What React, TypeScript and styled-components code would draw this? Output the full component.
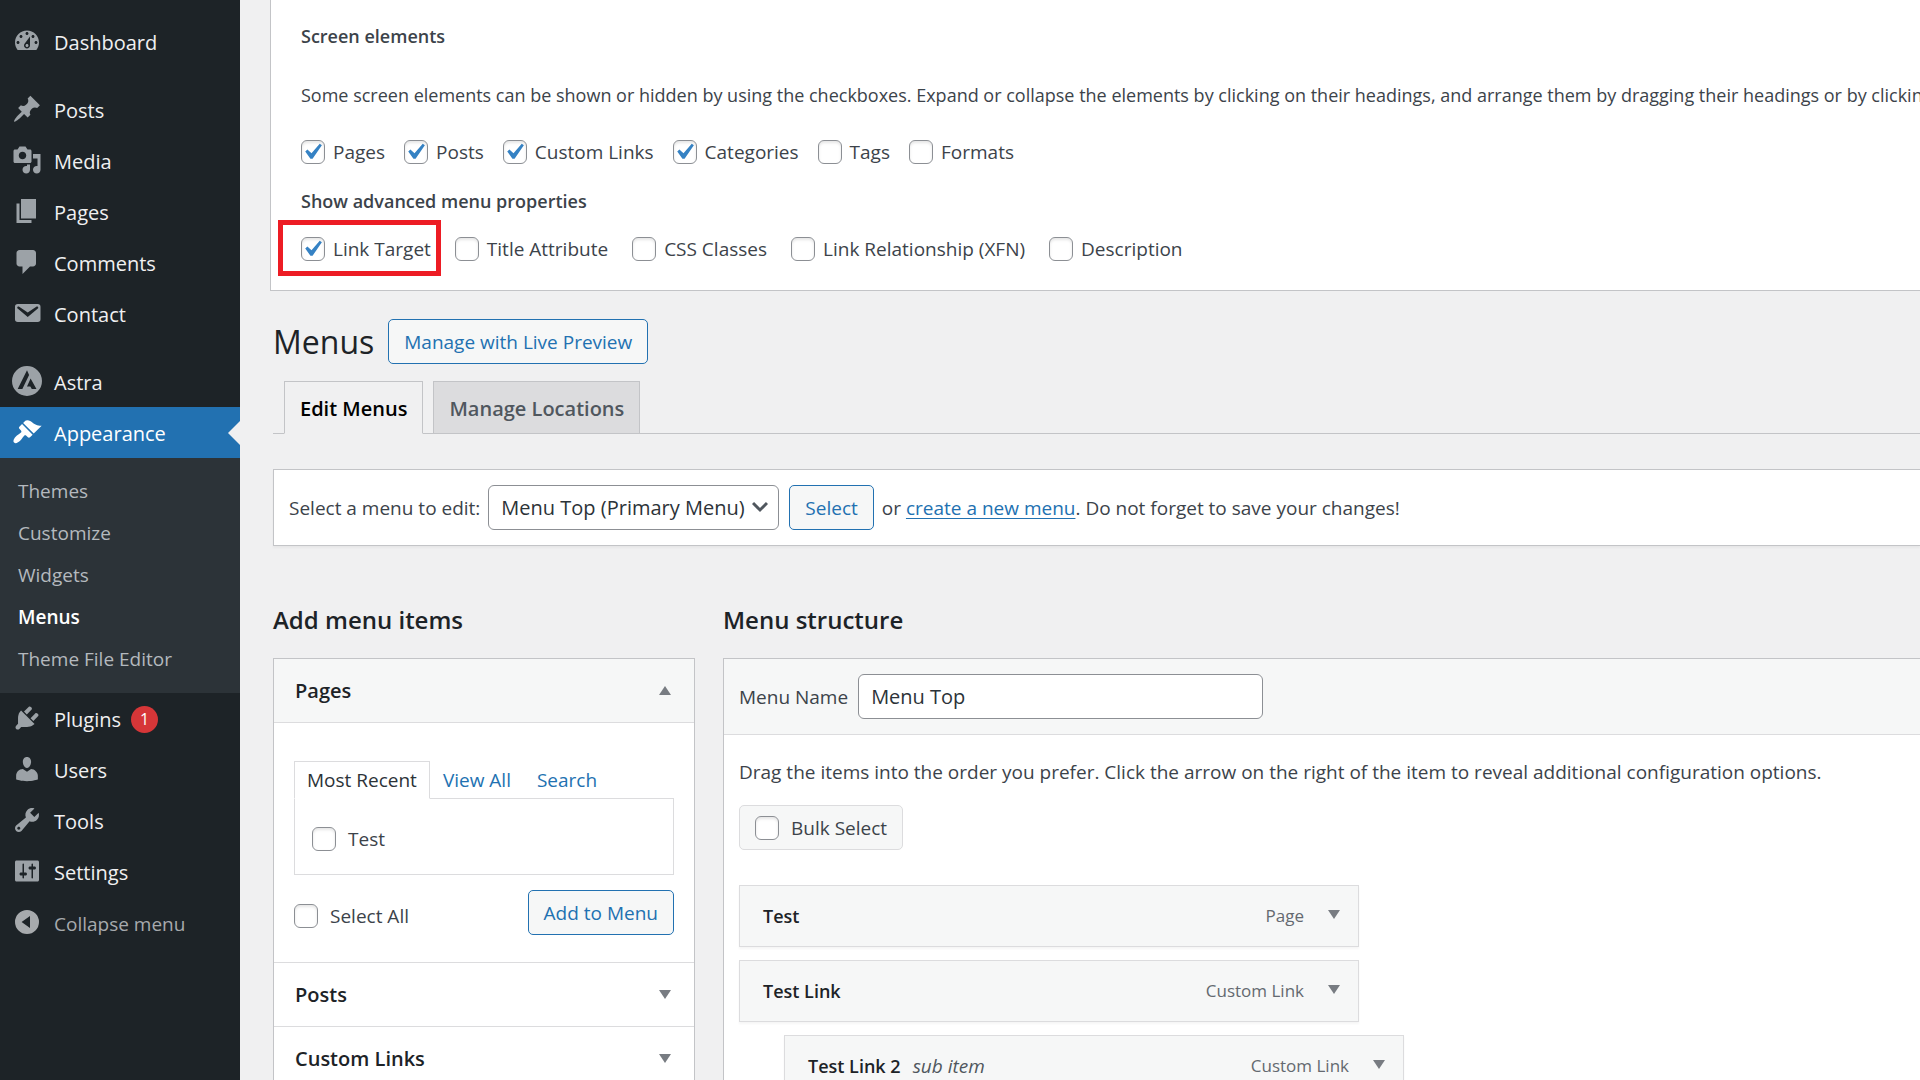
import React, { useState } from "react";
import styled, { createGlobalStyle, css } from "styled-components";

const line = "#c3c4c7";
const softLine = "#dcdcde";
const pageBg = "#f0f0f1";
const blue = "#2271b1";
const subtle = "#f6f7f7";

const GlobalStyle = createGlobalStyle`
  *, *::before, *::after { box-sizing: border-box; }
  body {
    margin: 0;
    background: ${pageBg};
    color: #3c434a;
    font-family: "Open Sans", "Noto Sans", sans-serif;
    font-size: 19px;
    line-height: 28px;
  }
  h1, h2, h3, p, ul { margin: 0; padding: 0; }
  ul { list-style: none; }
  button, input, select { font-family: inherit; }
`;

const Shell = styled.div`
  display: flex;
  height: 100vh;
  overflow: hidden;
`;

/* ---------- Sidebar ---------- */

const Sidebar = styled.nav`
  flex: 0 0 240px;
  padding-top: 16px;
  background: #1d2327;
`;

const NavItem = styled.li<{ $spaced?: boolean }>`
  margin-top: ${(p) => (p.$spaced ? "17px" : "0")};
`;

const navRow = css`
  display: flex;
  align-items: center;
  width: 100%;
  height: 51px;
  padding: 2px 12px 0;
  gap: 12px;
  font-size: 20px;
  text-decoration: none;
`;

const NavLink = styled.a<{ $current?: boolean }>`
  ${navRow}
  position: relative;
  color: ${(p) => (p.$current ? "#fff" : "#f0f0f1")};
  background: ${(p) => (p.$current ? blue : "transparent")};
  svg { fill: ${(p) => (p.$current ? "#fff" : "#9ca2a7")}; }
  ${(p) =>
    p.$current &&
    css`
      &::after {
        content: "";
        position: absolute;
        right: 0;
        top: 14px;
        border: 12px solid transparent;
        border-left-width: 0;
        border-right-color: ${pageBg};
      }
    `}
`;

const CollapseButton = styled.button`
  ${navRow}
  border: 0;
  background: none;
  color: #a7aaad;
  font-size: 19px;
  svg { fill: #a7aaad; }
`;

const NavIcon = styled.svg`
  flex: none;
  width: 30px;
  height: 30px;
  margin-bottom: 3px;
`;

const Badge = styled.span`
  display: grid;
  place-items: center;
  width: 27px;
  height: 27px;
  margin-left: -2px;
  border-radius: 50%;
  background: #d63638;
  color: #fff;
  font-size: 16px;
  line-height: 27px;
`;

const SubMenu = styled.ul`
  padding: 12px 0 13px;
  background: #2c3338;
`;

const SubLink = styled.a<{ $current?: boolean }>`
  display: block;
  padding: 0 18px;
  line-height: 42px;
  text-decoration: none;
  color: ${(p) => (p.$current ? "#fff" : "#b4b9be")};
  font-weight: ${(p) => (p.$current ? 600 : 400)};
`;

/* ---------- Shared controls ---------- */

const Main = styled.main`
  flex: 1;
  min-width: 0;
  overflow: hidden;
`;

const checkMark =
  "url(\"data:image/svg+xml;utf8,%3Csvg%20xmlns%3D%27http%3A%2F%2Fwww.w3.org%2F2000%2Fsvg%27%20viewBox%3D%270%200%2020%2020%27%3E%3Cpath%20d%3D%27M14.83%204.89l1.34.94-5.81%208.38H9.02L5.78%209.67l1.34-1.25%202.57%202.4z%27%20fill%3D%27%233582c4%27%2F%3E%3C%2Fsvg%3E\")";

const CheckBox = styled.input`
  appearance: none;
  flex: none;
  width: 24px;
  height: 24px;
  margin: 0;
  border: 1px solid #8c8f94;
  border-radius: 6px;
  background: #fff;
  box-shadow: inset 0 2px 3px rgba(0, 0, 0, 0.1);
  &:checked {
    background: #fff ${checkMark} -6px -5px / 32px 32px no-repeat;
  }
`;

const CheckLabel = styled.label<{ $gap?: number; $marked?: boolean }>`
  display: flex;
  align-items: center;
  width: fit-content;
  gap: ${(p) => p.$gap ?? 8}px;
  white-space: nowrap;
  ${(p) =>
    p.$marked &&
    css`
      position: relative;
      &::after {
        content: "";
        position: absolute;
        inset: -15px -10px -13px -23px;
        border: 5px solid #ed1c24;
        pointer-events: none;
      }
    `}
`;

const buttonLook = css`
  height: 45px;
  padding: 0 15px;
  border-radius: 5px;
  background: ${subtle};
  font-size: 19px;
  white-space: nowrap;
`;

const Button = styled.button`
  ${buttonLook}
  border: 1px solid ${blue};
  color: ${blue};
`;

const fieldLook = css`
  height: 45px;
  padding: 0 12px;
  border: 1px solid #8c8f94;
  border-radius: 6px;
  background: #fff;
  color: #2c3338;
  font-size: 20px;
`;

/* ---------- Screen options ---------- */

const ScreenOptions = styled.section`
  margin-left: 30px;
  padding: 22px 0 27px 30px;
  border: solid ${line};
  border-width: 0 0 1px 1px;
  background: #fff;
`;

const OptionsTitle = styled.h2`
  font-size: 18px;
  font-weight: 600;
`;

const OptionsText = styled.p`
  margin: 31px 0 29px;
  font-size: 18px;
  white-space: nowrap;
`;

const OptionRow = styled.div<{ $wide?: boolean }>`
  display: flex;
  height: 28px;
  gap: ${(p) => (p.$wide ? "24px" : "19px")};
  margin: ${(p) => (p.$wide ? "20px 0 0" : "0 0 21px")};
`;

/* ---------- Page head ---------- */

const Wrap = styled.div`
  padding: 28px 0 0 33px;
`;

const TitleRow = styled.div`
  display: flex;
  align-items: center;
  gap: 14px;
`;

const Title = styled.h1`
  color: #1d2327;
  font-size: 32px;
  font-weight: 400;
  line-height: 45px;
`;

const Tabs = styled.nav`
  display: flex;
  gap: 10px;
  margin-top: 17px;
  padding-left: 11px;
  border-bottom: 1px solid ${line};
`;

const Tab = styled.a<{ $current?: boolean }>`
  margin-bottom: -1px;
  padding: 13px 15px 10px;
  border: 1px solid ${line};
  border-bottom-color: ${(p) => (p.$current ? pageBg : line)};
  background: ${(p) => (p.$current ? pageBg : softLine)};
  color: ${(p) => (p.$current ? "#000" : "#50575e")};
  font-size: 20px;
  font-weight: 600;
  text-decoration: none;
`;

const ManageBar = styled.form`
  display: flex;
  align-items: center;
  margin-top: 35px;
  padding: 15px;
  border: solid ${line};
  border-width: 1px 0 1px 1px;
  background: #fff;
  box-shadow: 0 2px 2px rgba(0, 0, 0, 0.04);
`;

const SelectBox = styled.div`
  position: relative;
  margin: 0 10px 0 8px;
`;

const Select = styled.select`
  ${fieldLook}
  appearance: none;
  width: 291px;
`;

const Chevron = styled.svg`
  position: absolute;
  right: 11px;
  top: 16px;
  width: 16px;
  height: 12px;
  fill: none;
  stroke: #50575e;
  stroke-width: 3;
  pointer-events: none;
`;

const BarText = styled.p`
  margin-left: 8px;
  a {
    color: ${blue};
    text-decoration-thickness: 1px;
    text-underline-offset: 3px;
  }
`;

/* ---------- Columns ---------- */

const Columns = styled.div`
  display: grid;
  grid-template-columns: 422px minmax(0, 1fr);
  gap: 28px;
  margin-top: 56px;
`;

const ColumnTitle = styled.h2`
  margin-bottom: 20px;
  color: #1d2327;
  font-size: 24px;
  font-weight: 600;
  line-height: 36px;
`;

const Accordion = styled.ul`
  border: 1px solid ${line};
  background: #fff;
`;

const SectionHead = styled.h3`
  border-bottom: 1px solid ${softLine};
`;

const SectionToggle = styled.button<{ $open?: boolean }>`
  display: flex;
  align-items: center;
  justify-content: space-between;
  width: 100%;
  height: 63px;
  padding: 0 23px 0 21px;
  border: 0;
  background: ${(p) => (p.$open ? subtle : "#fff")};
  color: #1d2327;
  font-size: 20px;
  font-weight: 600;
`;

const Arrow = styled.svg`
  width: 12px;
  height: 9px;
  fill: #787c82;
`;

const SectionBody = styled.div`
  padding: 38px 20px 27px;
  border-bottom: 1px solid ${softLine};
`;

const InnerTabs = styled.div`
  display: flex;
`;

const InnerTab = styled.a<{ $current?: boolean }>`
  margin-bottom: -1px;
  padding: 4px 12px;
  border: 1px solid ${(p) => (p.$current ? softLine : "transparent")};
  border-bottom-color: ${(p) => (p.$current ? "#fff" : "transparent")};
  background: ${(p) => (p.$current ? "#fff" : "transparent")};
  color: ${(p) => (p.$current ? "#2c3338" : blue)};
  text-decoration: none;
`;

const TabPanel = styled.div`
  padding: 26px 17px 21px;
  border: 1px solid ${softLine};
`;

const BodyFoot = styled.div`
  display: flex;
  align-items: end;
  justify-content: space-between;
  margin-top: 15px;
  label { margin-bottom: 5px; }
`;

/* ---------- Menu structure ---------- */

const Editor = styled.section`
  border: solid ${line};
  border-width: 1px 0 0 1px;
  background: #fff;
`;

const EditorHead = styled.div`
  display: flex;
  align-items: center;
  gap: 10px;
  padding: 15px;
  border-bottom: 1px solid ${softLine};
  background: ${subtle};
`;

const NameInput = styled.input`
  ${fieldLook}
  width: 405px;
`;

const EditorBody = styled.div`
  padding: 23px 15px 0;
`;

const BulkSelect = styled.div`
  ${buttonLook}
  display: flex;
  align-items: center;
  width: fit-content;
  margin: 19px 0 35px;
  border: 1px solid ${softLine};
`;

const MenuItem = styled.li<{ $depth: number }>`
  display: flex;
  align-items: center;
  width: 620px;
  height: 62px;
  margin: 0 0 13px ${(p) => p.$depth * 45}px;
  padding: 0 18px 0 23px;
  border: 1px solid ${softLine};
  background: ${subtle};
  box-shadow: 0 2px 2px rgba(0, 0, 0, 0.04);
`;

const ItemName = styled.span`
  color: #1d2327;
  font-size: 18px;
  font-weight: 600;
`;

const SubNote = styled.em`
  margin-left: 12px;
  color: #50575e;
`;

const ItemType = styled.span`
  margin-left: auto;
  color: #646970;
  font-size: 17px;
`;

const ItemToggle = styled.button`
  display: flex;
  margin-left: 24px;
  padding: 0 0 3px;
  border: 0;
  background: none;
`;

/* ---------- Data ---------- */

const icons: Record<string, string> = {
  dashboard:
    "M3.76 16h12.48c1.1-1.37 1.76-3.11 1.76-5 0-4.42-3.58-8-8-8s-8 3.58-8 8c0 1.89.66 3.63 1.76 5zM10 4c.55 0 1 .45 1 1s-.45 1-1 1-1-.45-1-1 .45-1 1-1zM6 6c.55 0 1 .45 1 1s-.45 1-1 1-1-.45-1-1 .45-1 1-1zm8 0c.55 0 1 .45 1 1s-.45 1-1 1-1-.45-1-1 .45-1 1-1zm-5.37 5.55L12 7v6c0 1.1-.9 2-2 2s-2-.9-2-2c0-.57.24-1.08.63-1.45zM4 10c.55 0 1 .45 1 1s-.45 1-1 1-1-.45-1-1 .45-1 1-1zm12 0c.55 0 1 .45 1 1s-.45 1-1 1-1-.45-1-1 .45-1 1-1zm-5 3c0-.55-.45-1-1-1s-1 .45-1 1 .45 1 1 1 1-.45 1-1z",
  posts:
    "M10.44 3.02l1.82-1.82 6.36 6.35-1.83 1.82c-1.05-.68-2.48-.57-3.41.36l-.75.75c-.92.93-1.04 2.35-.35 3.41l-1.83 1.82-2.41-2.41-2.8 2.79c-.42.42-3.38 2.71-3.8 2.29s1.86-3.39 2.28-3.81l2.79-2.79L4.1 9.36l1.83-1.82c1.05.69 2.48.57 3.4-.36l.75-.75c.93-.92 1.05-2.35.36-3.41z",
  media:
    "M13 11V4c0-.55-.45-1-1-1h-1.67L9 1H5L3.67 3H2c-.55 0-1 .45-1 1v7c0 .55.45 1 1 1h10c.55 0 1-.45 1-1zM7 4.5c1.38 0 2.5 1.12 2.5 2.5S8.38 9.5 7 9.5 4.5 8.38 4.5 7 5.62 4.5 7 4.5zM14 6h5v10.5c0 1.38-1.12 2.5-2.5 2.5S14 17.88 14 16.5s1.12-2.5 2.5-2.5c.17 0 .34.02.5.05V9h-3V6zm-4 8.05V13h2v3.5c0 1.38-1.12 2.5-2.5 2.5S7 17.88 7 16.5 8.12 14 9.5 14c.17 0 .34.02.5.05z",
  pages: "M6 15V2h10v13H6zm-1 1h8v2H3V5h2v11z",
  comments:
    "M5 2h9c1.1 0 2 .9 2 2v7c0 1.1-.9 2-2 2h-2l-5 5v-5H5c-1.1 0-2-.9-2-2V4c0-1.1.9-2 2-2z",
  contact:
    "M3.87 4h13.25C18.37 4 19 4.59 19 5.79v8.42c0 1.19-.63 1.79-1.88 1.79H3.87c-1.25 0-1.88-.6-1.88-1.79V5.79c0-1.2.63-1.79 1.88-1.79zm6.62 8.6l6.74-5.53c.24-.2.43-.66.13-1.07-.29-.41-.82-.42-1.17-.17l-5.7 3.86L4.8 5.83c-.35-.25-.88-.24-1.17.17-.3.41-.11.87.13 1.07z",
  astra:
    "M10 0a10 10 0 1 0 0 20a10 10 0 1 0 0-20zM10 2.9L3.8 15.3H6.9L11.4 6zM12.4 8.4L10 13.6H12.2L13.2 15.3H16.3z",
  appearance:
    "M14.48 11.06L7.41 3.99l1.5-1.5c.5-.56 2.3-.47 3.51.32 1.21.8 1.43 1.28 2.91 2.1 1.18.64 2.45 1.26 4.45.85zm-.71.71L6.7 4.7 4.93 6.47c-.39.39-.39 1.02 0 1.41l1.06 1.06c.39.39.39 1.03 0 1.42-.6.6-1.43 1.11-2.21 1.69-.35.26-.7.53-1.01.84C1.43 14.23.4 16.08 1.4 17.07c.99 1 2.84-.03 4.18-1.36.31-.31.58-.66.85-1.02.57-.78 1.08-1.61 1.69-2.21.39-.39 1.02-.39 1.41 0l1.06 1.06c.39.39 1.02.39 1.41 0z",
  plugins:
    "M13.11 4.36L9.87 7.6 8 5.73l3.24-3.24c.35-.34 1.05-.2 1.56.32.52.51.66 1.21.31 1.55zm-8 1.77l.91-1.12 9.01 9.01-1.19.84c-.71.71-2.63 1.16-3.82 1.16H6.14L4.9 17.26c-.59.59-1.54.59-2.12 0-.59-.58-.59-1.53 0-2.12l1.24-1.24v-3.88c0-1.13.4-3.19 1.09-3.89zm7.26 3.97l3.24-3.24c.34-.35 1.04-.21 1.55.31.52.51.66 1.21.31 1.55l-3.24 3.25z",
  users:
    "M10 9.25c-2.27 0-2.73-3.44-2.73-3.44C7 4.02 7.82 2 9.97 2c2.16 0 2.98 2.02 2.71 3.81 0 0-.41 3.44-2.68 3.44zm0 2.57L12.72 10c2.39 0 4.52 2.33 4.52 4.53v2.49s-3.65 1.13-7.24 1.13c-3.65 0-7.24-1.13-7.24-1.13v-2.49c0-2.25 1.94-4.48 4.47-4.48z",
  tools:
    "M16.68 9.77c-1.34 1.34-3.3 1.67-4.95.99l-5.41 6.52c-.99.99-2.59.99-3.58 0s-.99-2.59 0-3.57l6.52-5.42c-.68-1.65-.35-3.61.99-4.95 1.28-1.28 3.12-1.62 4.72-1.06l-2.89 2.89 2.82 2.82 2.86-2.87c.53 1.58.18 3.39-1.08 4.65zM3.81 16.21c.4.39 1.04.39 1.43 0 .4-.4.4-1.04 0-1.43-.39-.4-1.03-.4-1.43 0-.39.39-.39 1.03 0 1.43z",
  settings:
    "M18 16V4c0-.55-.45-1-1-1H3c-.55 0-1 .45-1 1v12c0 .55.45 1 1 1h14c.55 0 1-.45 1-1zM8 11h1c.55 0 1 .45 1 1s-.45 1-1 1H8v1.5c0 .28-.22.5-.5.5s-.5-.22-.5-.5V13H6c-.55 0-1-.45-1-1s.45-1 1-1h1V5.5c0-.28.22-.5.5-.5s.5.22.5.5V11zm5-2h-1c-.55 0-1-.45-1-1s.45-1 1-1h1V5.5c0-.28.22-.5.5-.5s.5.22.5.5V7h1c.55 0 1 .45 1 1s-.45 1-1 1h-1v5.5c0 .28-.22.5-.5.5s-.5-.22-.5-.5V9z",
  collapse: "M10 2a8 8 0 1 0 0 16a8 8 0 1 0 0-16zM12 6v8L6.4 10z",
};

type NavEntry = {
  label: string;
  icon: string;
  spaced?: boolean;
  badge?: number;
  children?: string[];
};

const nav: NavEntry[] = [
  { label: "Dashboard", icon: "dashboard" },
  { label: "Posts", icon: "posts", spaced: true },
  { label: "Media", icon: "media" },
  { label: "Pages", icon: "pages" },
  { label: "Comments", icon: "comments" },
  { label: "Contact", icon: "contact" },
  { label: "Astra", icon: "astra", spaced: true },
  {
    label: "Appearance",
    icon: "appearance",
    children: ["Themes", "Customize", "Widgets", "Menus", "Theme File Editor"],
  },
  { label: "Plugins", icon: "plugins", badge: 1 },
  { label: "Users", icon: "users" },
  { label: "Tools", icon: "tools" },
  { label: "Settings", icon: "settings" },
];

const screenElements = [
  { label: "Pages", on: true },
  { label: "Posts", on: true },
  { label: "Custom Links", on: true },
  { label: "Categories", on: true },
  { label: "Tags", on: false },
  { label: "Formats", on: false },
];

const advancedProperties = [
  { label: "Link Target", on: true, marked: true },
  { label: "Title Attribute", on: false },
  { label: "CSS Classes", on: false },
  { label: "Link Relationship (XFN)", on: false },
  { label: "Description", on: false },
];

const menuItems = [
  { name: "Test", type: "Page", depth: 0 },
  { name: "Test Link", type: "Custom Link", depth: 0 },
  { name: "Test Link 2", type: "Custom Link", depth: 1 },
];

/* ---------- Components ---------- */

function Glyph({ name }: { name: string }) {
  return (
    <NavIcon viewBox="0 0 20 20" aria-hidden="true">
      <path fillRule="evenodd" d={icons[name]} />
    </NavIcon>
  );
}

function Check({
  label,
  on,
  gap,
  marked,
}: {
  label: string;
  on?: boolean;
  gap?: number;
  marked?: boolean;
}) {
  return (
    <CheckLabel $gap={gap} $marked={marked}>
      <CheckBox type="checkbox" defaultChecked={on} />
      {label}
    </CheckLabel>
  );
}

function Triangle({ up }: { up?: boolean }) {
  return (
    <Arrow viewBox="0 0 12 9" aria-hidden="true">
      <path d={up ? "M0 9L6 0L12 9z" : "M0 0H12L6 9z"} />
    </Arrow>
  );
}

function AdminNav() {
  return (
    <Sidebar aria-label="Main menu">
      <ul>
        {nav.map((item) => (
          <NavItem key={item.label} $spaced={item.spaced}>
            <NavLink href="#" $current={!!item.children}>
              <Glyph name={item.icon} />
              {item.label}
              {item.badge && <Badge>{item.badge}</Badge>}
            </NavLink>
            {item.children && (
              <SubMenu>
                {item.children.map((child) => (
                  <li key={child}>
                    <SubLink href="#" $current={child === "Menus"}>
                      {child}
                    </SubLink>
                  </li>
                ))}
              </SubMenu>
            )}
          </NavItem>
        ))}
        <li>
          <CollapseButton type="button">
            <Glyph name="collapse" />
            Collapse menu
          </CollapseButton>
        </li>
      </ul>
    </Sidebar>
  );
}

function AddItems() {
  return (
    <div>
      <ColumnTitle>Add menu items</ColumnTitle>
      <Accordion>
        <li>
          <SectionHead>
            <SectionToggle type="button" $open>
              Pages
              <Triangle up />
            </SectionToggle>
          </SectionHead>
          <SectionBody>
            <InnerTabs>
              <InnerTab href="#" $current>
                Most Recent
              </InnerTab>
              <InnerTab href="#">View All</InnerTab>
              <InnerTab href="#">Search</InnerTab>
            </InnerTabs>
            <TabPanel>
              <Check label="Test" gap={12} />
            </TabPanel>
            <BodyFoot>
              <Check label="Select All" gap={12} />
              <Button type="button">Add to Menu</Button>
            </BodyFoot>
          </SectionBody>
        </li>
        {["Posts", "Custom Links"].map((name) => (
          <li key={name}>
            <SectionHead>
              <SectionToggle type="button">
                {name}
                <Triangle />
              </SectionToggle>
            </SectionHead>
          </li>
        ))}
      </Accordion>
    </div>
  );
}

function MenuStructure() {
  const [menuName, setMenuName] = useState("Menu Top");
  return (
    <div>
      <ColumnTitle>Menu structure</ColumnTitle>
      <Editor>
        <EditorHead>
          <label htmlFor="menu-name">Menu Name</label>
          <NameInput
            id="menu-name"
            type="text"
            value={menuName}
            onChange={(e) => setMenuName(e.target.value)}
          />
        </EditorHead>
        <EditorBody>
          <p>
            Drag the items into the order you prefer. Click the arrow on the
            right of the item to reveal additional configuration options.
          </p>
          <BulkSelect>
            <Check label="Bulk Select" gap={12} />
          </BulkSelect>
          <ul>
            {menuItems.map((item) => (
              <MenuItem key={item.name} $depth={item.depth}>
                <ItemName>{item.name}</ItemName>
                {item.depth > 0 && <SubNote>sub item</SubNote>}
                <ItemType>{item.type}</ItemType>
                <ItemToggle type="button" aria-label={`Edit ${item.name}`}>
                  <Triangle />
                </ItemToggle>
              </MenuItem>
            ))}
          </ul>
        </EditorBody>
      </Editor>
    </div>
  );
}

export default function App() {
  return (
    <>
      <GlobalStyle />
      <Shell>
        <AdminNav />
        <Main>
          <ScreenOptions>
            <OptionsTitle>Screen elements</OptionsTitle>
            <OptionsText>
              Some screen elements can be shown or hidden by using the
              checkboxes. Expand or collapse the elements by clicking on their
              headings, and arrange them by dragging their headings or by
              clicking on the up and down arrows.
            </OptionsText>
            <OptionRow>
              {screenElements.map((o) => (
                <Check key={o.label} {...o} />
              ))}
            </OptionRow>
            <OptionsTitle>Show advanced menu properties</OptionsTitle>
            <OptionRow $wide>
              {advancedProperties.map((o) => (
                <Check key={o.label} {...o} />
              ))}
            </OptionRow>
          </ScreenOptions>
          <Wrap>
            <TitleRow>
              <Title>Menus</Title>
              <Button type="button">Manage with Live Preview</Button>
            </TitleRow>
            <Tabs aria-label="Secondary menu">
              <Tab href="#" $current>
                Edit Menus
              </Tab>
              <Tab href="#">Manage Locations</Tab>
            </Tabs>
            <ManageBar onSubmit={(e) => e.preventDefault()}>
              <label htmlFor="menu-select">Select a menu to edit:</label>
              <SelectBox>
                <Select id="menu-select">
                  <option>Menu Top (Primary Menu)</option>
                </Select>
                <Chevron viewBox="0 0 16 12" aria-hidden="true">
                  <path d="M1 2L8 9L15 2" />
                </Chevron>
              </SelectBox>
              <Button type="submit">Select</Button>
              <BarText>
                or <a href="#">create a new menu</a>. Do not forget to save your
                changes!
              </BarText>
            </ManageBar>
            <Columns>
              <AddItems />
              <MenuStructure />
            </Columns>
          </Wrap>
        </Main>
      </Shell>
    </>
  );
}
